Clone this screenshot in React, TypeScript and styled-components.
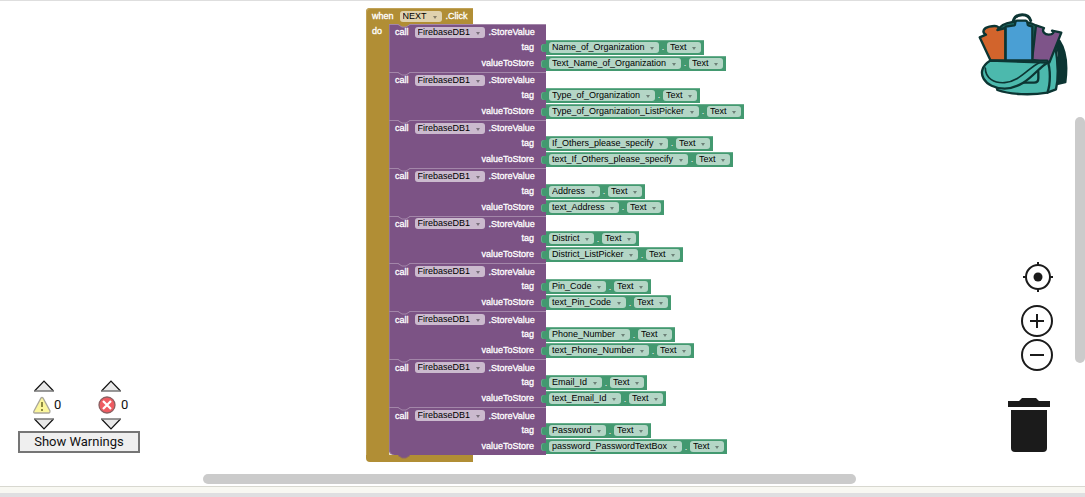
import React from "react";
import styled, { createGlobalStyle } from "styled-components";

const GlobalStyle = createGlobalStyle`
  * { box-sizing: border-box; }
  html, body, #root { height: 100%; }
  body { margin: 0; background: #fff; font-family: "Liberation Sans", Arial, sans-serif; }
`;

const GOLD = "#b18e35";
const PURPLE = "#7c5385";
const GREEN = "#439970";

const Page = styled.div`
  display: flex;
  flex-direction: column;
  height: 100vh;
  overflow: hidden;
  border-top: 1px solid #dedede;
`;

const Workspace = styled.main`
  position: relative;
  flex: 1;
  min-height: 0;
  background: #fff;
`;

const StatusStrip = styled.footer`
  height: 11px;
  background: #f8f8f2;
  border-top: 1px solid #d8d8d0;
  border-bottom: 4px solid #dfdfe1;
`;

const EventBlock = styled.section`
  position: absolute;
  left: 366px;
  top: 7px;
  display: flex;
  flex-direction: column;
  align-items: flex-start;
  font-size: 9px;
  line-height: 12px;
  color: #fff;
`;

const EventHead = styled.header`
  display: flex;
  align-items: center;
  width: 107px;
  height: 16px;
  padding-left: 6px;
  border-radius: 4px 0 0 0;
  background: ${GOLD};
  box-shadow: inset 1px 1px 0 #c0a258;
`;

const EventBody = styled.div`
  display: flex;
`;

const EventSpine = styled.div`
  width: 23px;
  padding: 1px 6px;
  background: ${GOLD};
  box-shadow: inset 1px 0 0 #c0a258;
`;

const EventFoot = styled.div`
  position: relative;
  width: 107px;
  height: 7px;
  border-radius: 0 0 0 4px;
  background: ${GOLD};
`;

const Word = styled.span`
  white-space: nowrap;
  -webkit-text-stroke: 0.3px currentColor;
`;

const CallList = styled.div`
  display: grid;
  grid-auto-rows: minmax(0, 1fr);
  height: 431px;
  background: #e6dcc2;
`;

const CallBlock = styled.div`
  position: relative;
  display: flex;
  flex-direction: column;
  width: 157px;
  background: ${PURPLE};
  border-top: 1px solid #a386a9;
  box-shadow: inset 1px 0 0 #93719b;
  &:last-child { border-bottom-left-radius: 5px; }
`;

const CallRow = styled.div`
  flex: 1;
  min-height: 0;
  display: flex;
  align-items: center;
  padding-left: 6px;
`;

const ArgRow = styled.div`
  flex: none;
  display: flex;
  align-items: flex-start;
  height: 16px;
`;

const ArgName = styled(Word)`
  flex: none;
  width: 145px;
  line-height: 14px;
  text-align: right;
`;

const Plug = styled.span`
  flex: none;
  width: 5px;
  height: 8px;
  margin: 4px 0 0 7px;
  border-radius: 3px 0 0 3px;
  background: ${GREEN};
  box-shadow: inset 1px 0 0 #69ae8d;
`;

const Property = styled.div`
  flex: none;
  display: flex;
  align-items: center;
  height: 15px;
  padding: 0 3px;
  background: ${GREEN};
  box-shadow: inset 0 1px 0 #69ae8d;
`;

const Dot = styled.span`
  width: 8px;
  text-align: center;
`;

const Field = styled.span`
  position: relative;
  display: inline-flex;
`;

const NamedField = styled(Field)`
  margin: 0 4px 0 6px;
`;

const Pick = styled.select<{ $tint: string }>`
  appearance: none;
  height: 11px;
  margin: 0;
  padding: 0 14px 0 3px;
  border: 0;
  border-radius: 3px;
  background: ${(p) => p.$tint};
  color: #000;
  font: 9px/11px "Liberation Sans", Arial, sans-serif;
`;

const Caret = styled.svg`
  position: absolute;
  right: 5px;
  top: 5px;
  width: 4px;
  height: 3px;
  pointer-events: none;
`;

const Notch = styled.svg<{ $last?: boolean }>`
  position: absolute;
  left: ${(p) => (p.$last ? "31px" : "8px")};
  top: ${(p) => (p.$last ? "0" : "-1px")};
  width: 14px;
  height: 4px;
`;

const Backpack = styled.button`
  position: absolute;
  right: 17px;
  top: 11px;
  padding: 0;
  border: 0;
  background: none;
  svg { display: block; }
`;

const Controls = styled.div`
  position: absolute;
  right: 31px;
  top: 259px;
  display: flex;
  flex-direction: column;
  align-items: flex-end;
`;

const IconButton = styled.button<{ $gap?: number }>`
  padding: 0;
  border: 0;
  margin: ${(p) => p.$gap || 0}px 0 0;
  background: none;
  svg { display: block; }
`;

const Warnings = styled.aside`
  position: absolute;
  left: 18px;
  bottom: 33px;
  width: 122px;
  font-family: Roboto, sans-serif;
`;

const Counters = styled.div`
  display: flex;
  gap: 37px;
  padding: 0 0 1px 15px;
`;

const Counter = styled.div`
  display: grid;
  grid-template-columns: 21px 9px;
  row-gap: 4px;
  align-items: center;
  font-size: 13px;
  line-height: 18px;
  color: #111;
`;

const Step = styled.button`
  grid-column: 1 / 3;
  justify-self: start;
  padding: 0;
  border: 0;
  background: none;
  svg { display: block; }
`;

const ShowButton = styled.button`
  display: block;
  width: 100%;
  height: 22px;
  padding: 0;
  border: 2px solid #757575;
  background: #efefef;
  color: #111;
  font: 13px/18px Roboto, sans-serif;
`;

const HorizontalBar = styled.div`
  position: absolute;
  left: 203px;
  right: 229px;
  bottom: 2px;
  height: 10px;
  border-radius: 5px;
  background: #cbcbcb;
`;

const VerticalBar = styled.div`
  position: absolute;
  right: 0;
  top: 116px;
  width: 10px;
  height: 246px;
  border-radius: 5px;
  background: #cbcbcb;
`;

const calls = [
  ["Name_of_Organization", "Text_Name_of_Organization"],
  ["Type_of_Organization", "Type_of_Organization_ListPicker"],
  ["If_Others_please_specify", "text_If_Others_please_specify"],
  ["Address", "text_Address"],
  ["District", "District_ListPicker"],
  ["Pin_Code", "text_Pin_Code"],
  ["Phone_Number", "text_Phone_Number"],
  ["Email_Id", "text_Email_Id"],
  ["Password", "password_PasswordTextBox"],
];

type DropdownProps = { value: string; label: string; tint: string; named?: boolean };

function Dropdown({ value, label, tint, named }: DropdownProps) {
  const Wrap = named ? NamedField : Field;
  return (
    <Wrap>
      <Pick aria-label={label} $tint={tint} defaultValue={value}>
        <option>{value}</option>
      </Pick>
      <Caret viewBox="0 0 4 3"><path d="M0 0h4L2 3z" fill="#000" fillOpacity=".4" /></Caret>
    </Wrap>
  );
}

function Argument({ name, component }: { name: string; component: string }) {
  return (
    <ArgRow>
      <ArgName>{name}</ArgName>
      <Plug />
      <Property>
        <Dropdown value={component} label={`${name} component`} tint="#b4d6c6" />
        <Dot>.</Dot>
        <Dropdown value="Text" label={`${name} property`} tint="#b4d6c6" />
      </Property>
    </ArgRow>
  );
}

function StoreCall({ tag, value, first }: { tag: string; value: string; first: boolean }) {
  return (
    <CallBlock>
      <Notch viewBox="0 0 14 4">
        <path d="M1 0L5 3h4l4-3z" fill={first ? GOLD : PURPLE} />
        <path d="M1 .5L5 3h4l4-2.500" fill="none" stroke="#a386a9" />
      </Notch>
      <CallRow>
        <Word>call</Word>
        <Dropdown named value="FirebaseDB1" label="Database" tint="#cbbace" />
        <Word>.StoreValue</Word>
      </CallRow>
      <Argument name="tag" component={tag} />
      <Argument name="valueToStore" component={value} />
    </CallBlock>
  );
}

function StepArrow({ down, label }: { down?: boolean; label: string }) {
  return (
    <Step aria-label={label}>
      <svg width="22" height="12" viewBox="0 0 22 12">
        <path d={down ? "M1.500 1h19L11 11z" : "M1.500 11h19L11 1z"} fill="#e8e8e8" />
        <path d={down ? "M1.500 1L11 11l9.500-10" : "M1.500 11L11 1l9.500 10"} fill="none" stroke="#111" strokeWidth="1.200" />
        <path d={down ? "M1 1h20" : "M1 11h20"} stroke="#777" strokeWidth="1.500" />
      </svg>
    </Step>
  );
}

export default function App() {
  return (
    <Page>
      <GlobalStyle />
      <Workspace>
        <EventBlock>
          <EventHead>
            <Word>when</Word>
            <Dropdown named value="NEXT" label="Button" tint="#e0d2ae" />
            <Word>.Click</Word>
          </EventHead>
          <EventBody>
            <EventSpine><Word>do</Word></EventSpine>
            <CallList>
              {calls.map(([tag, value], i) => (
                <StoreCall key={tag} tag={tag} value={value} first={i === 0} />
              ))}
            </CallList>
          </EventBody>
          <EventFoot>
            <Notch $last viewBox="0 0 14 4">
              <path d="M1 0L5 3h4l4-3z" fill={PURPLE} />
              <path d="M1 .5L5 3h4l4-2.500" fill="none" stroke="#8f6b62" />
            </Notch>
          </EventFoot>
        </EventBlock>

        <Backpack aria-label="Backpack">
          <svg width="90" height="85" viewBox="24 36 270 255" strokeLinejoin="round" strokeLinecap="round" stroke="#0c3533" strokeWidth="7">
            <path d="M268 122c20 30 24 78 18 124l-26 6 4-30c6-40 4-70-6-86z" fill="#0c3533" />
            <path d="M90 82C110 60 185 58 205 84l-6 96H100z" fill="#1f6c65" />
            <path d="M130 62c8-24 46-24 52 0" fill="none" strokeWidth="9" />
            <path d="M232 188l24-50c8 50 10 96 2 130l-26 10z" fill="#4cb9ad" />
            <path d="M29 112l19-8c-14-8-8-20 10-24 22-5 34 0 24 10l24-6v98H62z" fill="#d2642c" />
            <path d="M198 76l24 8c-8 10 2 20 14 20 14 0 18-8 10-12l28 6-36 90-52-8z" fill="#7e5489" />
            <path d="M107 80l26-4c6-2-2-12 8-14h26c10 2 2 12 8 14l12 4v102h-80z" fill="#4a9fd4" />
            <path d="M62 182h170c10 24 10 70 0 96-50 8-110 6-150-8z" fill="#4cb9ad" />
            <path d="M205 215v20q0 13-13 13h-34" fill="none" />
            <path d="M60 182L232 188C196 210 170 262 104 266 44 266 10 214 60 182z" fill="#4cb9ad" />
            <path d="M46 204C46 236 74 250 104 248c46-4 70-44 104-60" fill="none" strokeWidth="5" />
          </svg>
        </Backpack>

        <Controls>
          <IconButton aria-label="Center">
            <svg width="32" height="32" viewBox="0 0 32 32" fill="none" stroke="#1b1b1b" strokeWidth="2">
              <circle cx="16" cy="17" r="12" /><circle cx="16" cy="17" r="4.500" fill="#1b1b1b" stroke="none" />
              <path d="M16 2v4M16 28v4M1 17h4M27 17h4" />
            </svg>
          </IconButton>
          <IconButton aria-label="Zoom in" $gap={12}>
            <svg width="34" height="34" viewBox="0 0 34 34" fill="none" stroke="#1b1b1b" strokeWidth="2">
              <circle cx="17" cy="17" r="15" /><path d="M10 17h14M17 10v14" />
            </svg>
          </IconButton>
          <IconButton aria-label="Zoom out">
            <svg width="34" height="34" viewBox="0 0 34 34" fill="none" stroke="#1b1b1b" strokeWidth="2">
              <circle cx="17" cy="17" r="15" /><path d="M10 17h14" />
            </svg>
          </IconButton>
          <IconButton aria-label="Trash" $gap={25}>
            <svg width="46" height="56" viewBox="0 0 46 56" fill="#1b1b1b">
              <path d="M0 4h11l3-3h14l3 3h11v6H0z" /><path d="M3 13h36v38q0 4-4 4H7q-4 0-4-4z" />
            </svg>
          </IconButton>
        </Controls>

        <Warnings>
          <Counters>
            <Counter>
              <StepArrow label="Previous warning" />
              <svg width="20" height="18" viewBox="1 0 20 18">
                <path d="M9 2q1-1 2 0l7 13q0 2-1 2H3q-2 0-1-2z" fill="#fbf69c" stroke="#aaa79a" strokeWidth="1.300" />
                <path d="M10 6v5M10 13v2" stroke="#8d8a42" strokeWidth="2" />
              </svg>
              <span>0</span>
              <StepArrow down label="Next warning" />
            </Counter>
            <Counter>
              <StepArrow label="Previous error" />
              <svg width="20" height="18" viewBox="3 0 20 18" overflow="visible">
                <circle cx="10" cy="9" r="8" fill="#ef5c62" stroke="#8a6062" strokeWidth="1.300" />
                <path d="M6 5l8 8M14 5l-8 8" stroke="#fff" strokeWidth="2.200" />
              </svg>
              <span>0</span>
              <StepArrow down label="Next error" />
            </Counter>
          </Counters>
          <ShowButton>Show Warnings</ShowButton>
        </Warnings>

        <HorizontalBar />
        <VerticalBar />
      </Workspace>
      <StatusStrip />
    </Page>
  );
}
